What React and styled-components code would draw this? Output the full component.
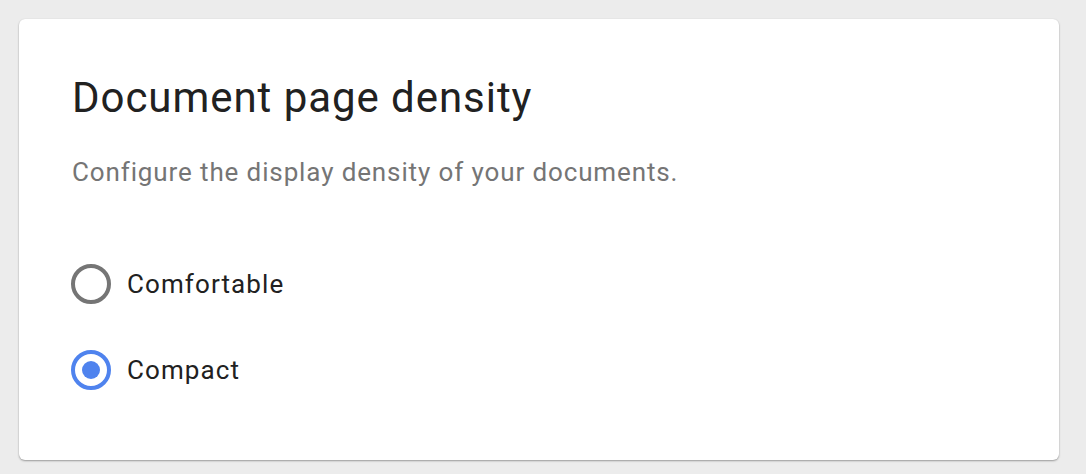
import React, { useState } from 'react'
import styled, { createGlobalStyle } from 'styled-components'

const GlobalStyle = createGlobalStyle`
  html, body {
    margin: 0;
    padding: 0;
    background: #ececec;
  }
  body {
    font-family: Roboto, 'Noto Sans', 'Liberation Sans', sans-serif;
  }
`

const Page = styled.div`
  padding: 19px 27px 14px 19px;
`

const Card = styled.section`
  background: #fff;
  border-radius: 6px;
  box-shadow: 0 1px 2px rgba(0, 0, 0, 0.35), 0 0 1px rgba(0, 0, 0, 0.08);
  padding: 54px 53px 70px;
  display: flex;
  flex-direction: column;
`

const Title = styled.h2`
  margin: 0;
  font-size: 42px;
  line-height: 50px;
  font-weight: 400;
  letter-spacing: 0.95px;
  color: #212121;
`

const Subtitle = styled.p`
  margin: 34px 0 0;
  font-size: 26px;
  line-height: 30px;
  letter-spacing: 0.88px;
  color: #757575;
`

const Options = styled.div`
  margin-top: 77px;
  display: flex;
  flex-direction: column;
  gap: 46px;
`

const Option = styled.label`
  display: flex;
  align-items: center;
  gap: 16px;
  height: 40px;
  cursor: pointer;
`

const Radio = styled.span`
  box-sizing: border-box;
  width: 40px;
  height: 40px;
  margin-left: -1px;
  border-radius: 50%;
  border: 4px solid ${(props) => (props.checked ? '#4f83ee' : '#757575')};
  display: flex;
  align-items: center;
  justify-content: center;

  &::after {
    content: '';
    width: 18px;
    height: 18px;
    border-radius: 50%;
    background: #4f83ee;
    display: ${(props) => (props.checked ? 'block' : 'none')};
  }
`

const Label = styled.span`
  font-size: 26px;
  line-height: 40px;
  letter-spacing: 1.1px;
  color: #212121;
`

const options = ['Comfortable', 'Compact']

const App = () => {
  const [density, setDensity] = useState('Compact')
  return (
    <Page>
      <GlobalStyle />
      <Card>
        <Title>Document page density</Title>
        <Subtitle>Configure the display density of your documents.</Subtitle>
        <Options>
          {options.map((opt) => (
            <Option key={opt} onClick={() => setDensity(opt)}>
              <Radio checked={density === opt} />
              <Label>{opt}</Label>
            </Option>
          ))}
        </Options>
      </Card>
    </Page>
  )
}

export default App
